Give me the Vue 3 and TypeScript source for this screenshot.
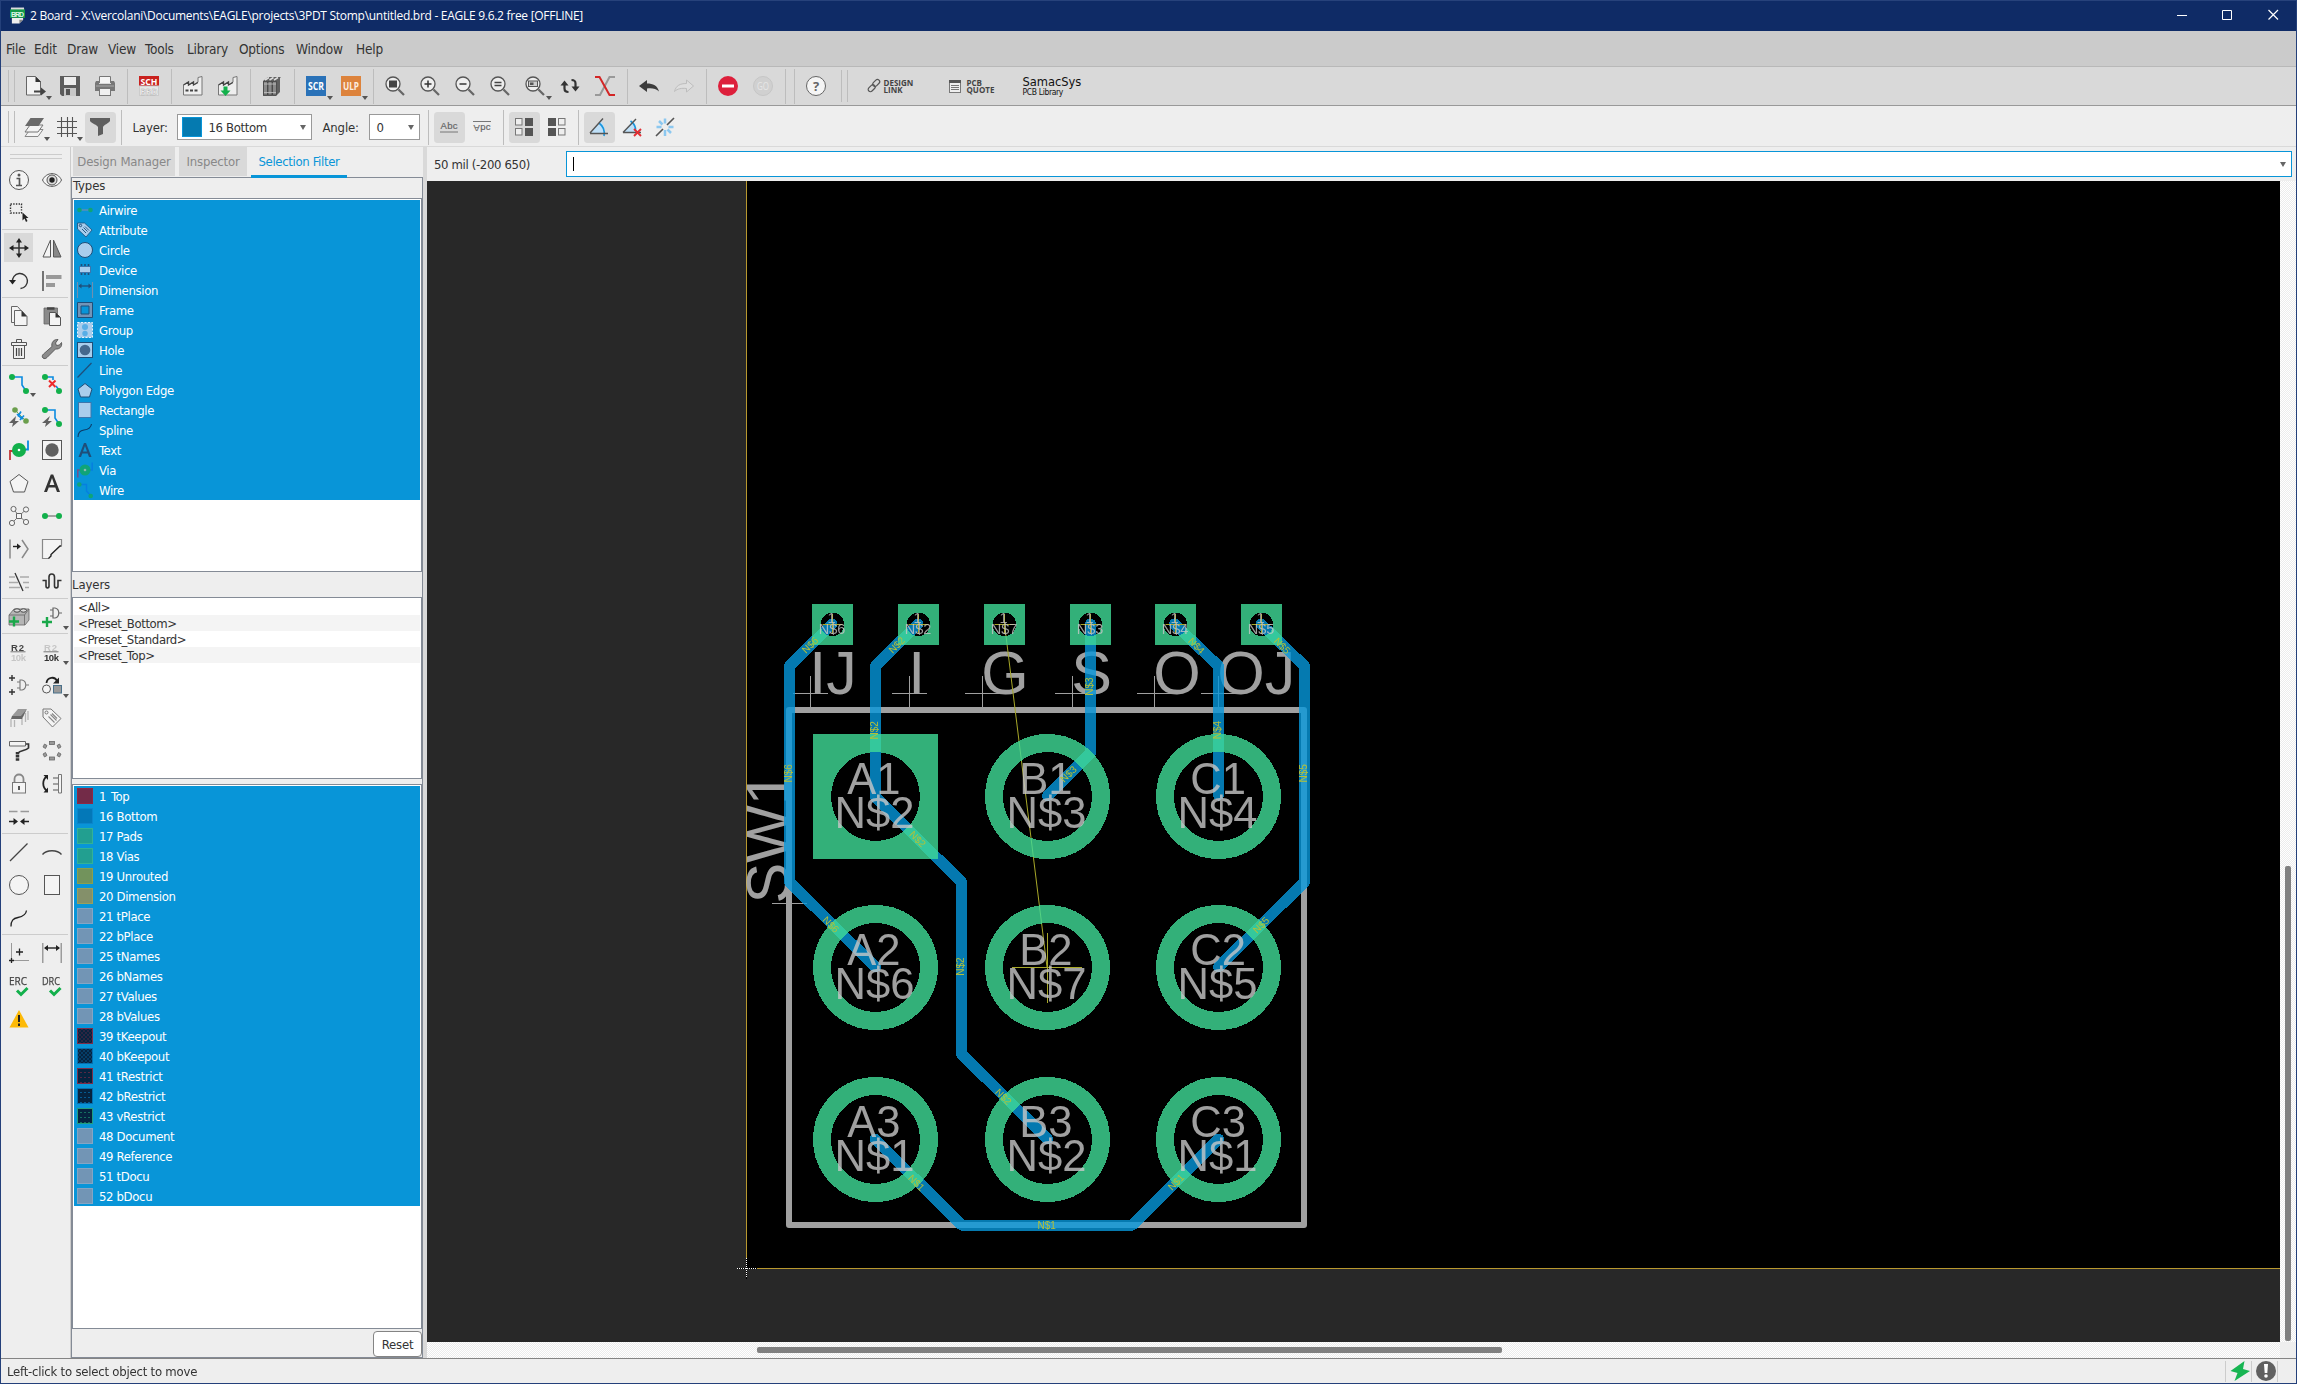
<script setup lang="ts">
interface Tool { icon?: string; sep?: boolean; menu?: boolean; active?: boolean }

const I: Record<string, string> = {
  brd: '<path d="M1 0h14v5H1z" fill="#ddd"/><path d="M2 11h12v2l-4 4H2z" fill="#eee"/><path d="M14 13l-4 4v-4z" fill="#888"/><rect x="0" y="2" width="16" height="9" fill="#159a4a"/><text x="8" y="9.6" font-size="7.5" font-weight="bold" font-family="Liberation Sans, sans-serif" fill="#dff5e6" text-anchor="middle" textLength="14">BRD</text>',
  newdoc: '<path d="M1.5 .5h9l5 5v13.500h-14z" fill="#f3f3f3" stroke="#666"/><path d="M10.500 .5v5.500h5.500z" fill="#333"/><path d="M9 14.500h7v-3l5 4-5 4v-3h-7z" fill="#444"/>',
  save: '<path d="M0 0h20v20H2l-2-2z" fill="#5c5c5c"/><rect x="4" y="1" width="12" height="8" fill="#ececec"/><rect x="4" y="12" width="12" height="8" fill="#c8c8c8"/><rect x="6" y="13" width="4" height="6" fill="#555"/>',
  print: '<path d="M4.500 7V.5h11V7" fill="#f5f5f5" stroke="#777"/><path d="M1 5h3v3h12V5h3l1 2v8H0V7z" fill="#777"/><rect x="4.500" y="12.500" width="11" height="7" fill="#f0f0f0" stroke="#777"/><path d="M1 10h18" stroke="#aaa"/>',
  sch: '<rect width="20" height="10" fill="#c9211e"/><rect x=".5" y="10" width="19" height="9.500" fill="#e6e6e6" stroke="#ccc"/><text x="10" y="8.600" font-size="9.500" font-weight="bold" font-family="Open Sans, sans-serif" fill="#fff" text-anchor="middle" textLength="17" lengthAdjust="spacingAndGlyphs">SCH</text><text x="10" y="18.600" font-size="9.500" font-weight="bold" font-family="Open Sans, sans-serif" fill="#fff" stroke="#aaa" stroke-width=".5" text-anchor="middle" textLength="17" lengthAdjust="spacingAndGlyphs">BRD</text>',
  factory: '<path d="M.5 19V9l5-3v3l5-3v3l4.500-3V1.500l4-1V19z" fill="#eee" stroke="#777"/><path d="M.5 9l5-3v3l5-3v3l4.500-2.500" fill="none" stroke="#444" stroke-width="1.300"/><path d="M2.500 14.500h12" stroke="#444" stroke-width="2" stroke-dasharray="3 1.500"/>',
  factorydown: '<path d="M.5 19V9l5-3v3l5-3v3l4.500-3V1.500l4-1V19z" fill="#eee" stroke="#777"/><path d="M.5 9l5-3v3l5-3v3l4.500-2.500" fill="none" stroke="#444" stroke-width="1.300"/><path d="M5.500 10.500h4v4h3L7.500 20l-5-5.500h3z" fill="#12b04b"/>',
  books: '<path d="M1 5l5-4h13l-1 1v14l-4 4H1z" fill="#606060"/><path d="M1.500 5.500h4v13.500h-4zM6 5.500h4v13.500H6zM10.500 5.500h4v13.500h-4z" fill="#8a8a8a" stroke="#444" stroke-width=".8"/><path d="M3 4l4-2.500M7.500 4l4-2.500M12 4l4-2.500" stroke="#ddd" stroke-width="1.500"/><path d="M2 8h12M2 16.500h12" stroke="#c5c5c5" stroke-width=".8"/>',
  scr: '<rect width="20" height="20" fill="#2a72b8"/><text x="10" y="13.800" font-size="10" font-weight="bold" font-family="Open Sans, sans-serif" fill="#fff" text-anchor="middle" textLength="16" lengthAdjust="spacingAndGlyphs">SCR</text>',
  ulp: '<rect width="20" height="20" fill="#dd833c"/><text x="10" y="13.800" font-size="10" font-weight="bold" font-family="Open Sans, sans-serif" fill="#fdeee0" text-anchor="middle" textLength="16" lengthAdjust="spacingAndGlyphs">ULP</text>',
  zfit: '<circle cx="8" cy="8" r="7" fill="#eee" stroke="#555" stroke-width="1.300"/><rect x="4" y="4.500" width="8" height="7" fill="#444"/><path d="M13.500 13.500L19 19" stroke="#666" stroke-width="2.200"/>',
  zin: '<circle cx="8" cy="8" r="7" fill="#eee" stroke="#555" stroke-width="1.300"/><path d="M4.500 8h7M8 4.500v7" stroke="#333" stroke-width="1.500"/><path d="M13.500 13.500L19 19" stroke="#666" stroke-width="2.200"/>',
  zout: '<circle cx="8" cy="8" r="7" fill="#eee" stroke="#555" stroke-width="1.300"/><path d="M4.500 8h7" stroke="#333" stroke-width="1.500"/><path d="M13.500 13.500L19 19" stroke="#666" stroke-width="2.200"/>',
  zeq: '<circle cx="8" cy="8" r="7" fill="#eee" stroke="#555" stroke-width="1.300"/><path d="M4.500 6.500h7M4.500 9.500h7" stroke="#444" stroke-width="1.300"/><path d="M13.500 13.500L19 19" stroke="#666" stroke-width="2.200"/>',
  zsel: '<circle cx="8" cy="8" r="7" fill="#eee" stroke="#555" stroke-width="1.300"/><rect x="3.500" y="5" width="9" height="5.500" fill="#ccc" stroke="#555"/><rect x="5" y="6.500" width="3.500" height="2.500" fill="#555"/><path d="M13.500 13.500L19 19" stroke="#666" stroke-width="2.200"/>',
  refresh: '<path d="M4.500 7.500v5c0 2.500 1.500 3.500 4 3.500M15.500 12.500v-5c0-2.500-1.500-3.500-4-3.500" fill="none" stroke="#333" stroke-width="2.200"/><path d="M.5 9.500l4-5 4 5zM19.500 10.500l-4 5-4-5z" fill="#333"/>',
  cross: '<path d="M0 19h5L14.500 1H20" fill="none" stroke="#999" stroke-width="2"/><path d="M0 1h4.500L14.500 19H20" fill="none" stroke="#d32626" stroke-width="2"/>',
  undo: '<path d="M0 10l8-6v3.500c6 0 10.500 2 12 8-3-3-7-3.500-12-3v3.500z" fill="#3c3c3c"/>',
  redo: '<path d="M19.500 10l-7-6v3.500C6 7.500 2 9.500.5 15.500c3-3 7-3.500 12-3V16z" fill="#dedede" stroke="#bdbdbd"/>',
  stop: '<circle cx="10" cy="10" r="10" fill="#dd1f3b"/><rect x="4" y="8.500" width="12" height="3" fill="#fff"/>',
  go: '<circle cx="10" cy="10" r="9.500" fill="#d0d0d0" stroke="#c6c6c6"/><text x="10" y="13.800" font-size="10.500" font-family="Open Sans, sans-serif" fill="#e6e6e6" text-anchor="middle" textLength="12" lengthAdjust="spacingAndGlyphs">GO</text>',
  help: '<circle cx="10" cy="10" r="9.500" fill="#f5f5f5" stroke="#666"/><text x="10" y="14.800" font-size="13" font-weight="bold" font-family="Open Sans, sans-serif" fill="#666" text-anchor="middle">?</text>',
  layers: '<path d="M6 12.500h13l-5 7H1z" fill="#f4f4f4" stroke="#888"/><path d="M6 8h13l-5 7H1z" fill="#f4f4f4" stroke="#777"/><path d="M6.500 1H20l-5.500 8H1z" fill="#6a6a6a"/>',
  grid: '<path d="M4.500 0v20M10.500 0v20M15.500 0v20M0 4.500h20M0 10.500h20M0 16.500h20" stroke="#555" stroke-width="1.100"/>',
  filter: '<path d="M0 1h20v3c-2 3-6 3.500-7 6v7l-5 2v-9C7 7.500 2 7 0 4z" fill="#5f5f5f"/>',
  abc: '<text x="10" y="12" font-size="9.500" font-family="Liberation Sans, sans-serif" fill="#666" stroke="#666" stroke-width=".2" text-anchor="middle" textLength="17">Abc</text><path d="M1 15h18" stroke="#777"/>',
  vpc: '<text x="10" y="-7.500" transform="scale(1 -1)" font-size="9.500" font-family="Liberation Sans, sans-serif" fill="#666" stroke="#666" stroke-width=".2" text-anchor="middle" textLength="17">Abc</text><path d="M1 4.500h18" stroke="#777"/>',
  sq1: '<rect x="1.500" y="1.500" width="6.500" height="6.500" fill="#eee" stroke="#777"/><rect x="11" y="1" width="8" height="8" fill="#555"/><rect x="1.500" y="11.500" width="6.500" height="6.500" fill="#eee" stroke="#777"/><rect x="11" y="11" width="8" height="8" fill="#555"/>',
  sq2: '<rect x="1" y="1" width="8" height="8" fill="#555"/><rect x="11.500" y="1.500" width="6.500" height="6.500" fill="#eee" stroke="#777"/><rect x="1" y="11" width="8" height="8" fill="#555"/><rect x="11.500" y="11.500" width="6.500" height="6.500" fill="#eee" stroke="#777"/>',
  ang: '<path d="M1.500 16L12 4c3 4 4 8 4 12z" fill="#bfe0f8"/><path d="M10 6c4 3 6 8 5 13" fill="none" stroke="#1a95dc" stroke-width="1.600"/><path d="M1 16L14 1.500M1 16.500h18" stroke="#555" stroke-width="1.400"/>',
  angx: '<path d="M1.500 15L10 5c3 4 4 7 4 10z" fill="#bfe0f8"/><path d="M8.500 4c4 3 5.500 7 5 10" fill="none" stroke="#1a95dc" stroke-width="1.600"/><path d="M1 15.500L14 2M1 15.500h18" stroke="#555" stroke-width="1.400"/><path d="M12 12l7 7M19 12l-7 7" stroke="#e22d33" stroke-width="1.900"/>',
  burst: '<path d="M10 1.500v5M10 13v6M1.500 10h5M13.500 10h5M4 4l3.500 3.500M12.500 12.500L16 16" stroke="#8cc8f0" stroke-width="2.500"/><path d="M19 1l-7 7M8 12l-7 7" stroke="#555" stroke-width="1.600"/>',
  info: '<circle cx="10" cy="10" r="9.500" fill="#f4f4f4" stroke="#555"/><path d="M7.500 8.500h3v7M7 15.500h6" fill="none" stroke="#555" stroke-width="1.700"/><circle cx="10" cy="5" r="1.500" fill="#555"/>',
  eye: '<path d="M.5 10c4-8.500 15-8.500 19 0-4 8.500-15 8.500-19 0z" fill="#f4f4f4" stroke="#555"/><circle cx="10" cy="10" r="5" fill="#ddd" stroke="#555"/><circle cx="10" cy="10" r="2.700" fill="#222"/>',
  group: '<path d="M1.500 1h11v9h-11z" fill="none" stroke="#333" stroke-width="1.400" stroke-dasharray="1.400 1.300"/><path d="M13.500 9.500v8l2-2 1.500 3.500 1.500-1-1.500-3h2.500z" fill="#222"/>',
  move: '<path d="M10 2v16M2 10h16" stroke="#333" stroke-width="1.500"/><path d="M10 0l3 4.500H7zM10 20l3-4.500H7zM0 10l4.500-3v6zM20 10l-4.500-3v6z" fill="#222"/>',
  mirror: '<path d="M8.500 2v17H1z" fill="#f4f4f4" stroke="#555"/><path d="M11.500 2v17H19z" fill="#888" stroke="#555"/>',
  rotate: '<path d="M3.500 11a7.500 7.500 0 1 1 8 6.500" fill="none" stroke="#333" stroke-width="1.400"/><path d="M0 9h7l-3.500 4.500z" fill="#222"/>',
  align: '<path d="M1 0v20" stroke="#222" stroke-width="1.200"/><rect x="4" y="4" width="15.500" height="4" fill="#999"/><rect x="4" y="12" width="9" height="4" fill="#999"/>',
  copy: '<path d="M2.500 .5h6l3.500 4v12H2.500z" fill="#f4f4f4" stroke="#666"/><path d="M5.500 4.500h7l5.500 6v9H5.500z" fill="#f4f4f4" stroke="#666"/><path d="M12.500 4.500v6H18z" fill="#333"/>',
  paste: '<path d="M2 2h13.500v16H2z" fill="#8a8a8a" stroke="#666" stroke-width=".8"/><path d="M5 2.500h7.500" stroke="#444" stroke-width="2.500"/><path d="M7.500 6.500h6l5 5v8h-11z" fill="#f4f4f4" stroke="#555"/><path d="M13.500 6.500v5h5z" fill="#333"/>',
  trash: '<path d="M2.500 3.500h15v3h-15zM7.500 3.500v-3h5v3M4.500 6.500h11v13h-11z" fill="#f0f0f0" stroke="#555"/><path d="M7.500 9v8M10 9v8M12.500 9v8" stroke="#444" stroke-width="1.200"/>',
  wrench: '<path d="M1 19c-1.500-1.500-.5-3 .5-4L10 7.500c-1-4 2-7.500 6-7l-2.500 3.500 1 2.500 3-.5 2-2.500c1 4-2 7-6 6.500L5 18.500c-1 1-2.800 1.700-4 .5z" fill="#8b8b8b" stroke="#555" stroke-width=".9"/>',
  route: '<path d="M3 3h10v8l4 6" fill="none" stroke="#0a8be0" stroke-width="1.600"/><circle cx="3" cy="3" r="3" fill="#12b04b"/><circle cx="17" cy="17" r="3" fill="#12b04b"/>',
  ripup: '<path d="M3 3h8v3M14 12l3 4" fill="none" stroke="#0a8be0" stroke-width="1.600"/><circle cx="3" cy="3" r="3" fill="#12b04b"/><circle cx="17" cy="17" r="3" fill="#12b04b"/><path d="M7 6.500l6.500 6.500M13.500 6.500L7 13" stroke="#ee2a2a" stroke-width="2"/>',
  fan: '<path d="M6 3l11 11" stroke="#78a95a"/><path d="M8 7l4 4M12 4.500l-3 5M15 8.500l-4 4.500M10 9l4 3" stroke="#0a8be0" stroke-width="1.600"/><circle cx="6" cy="3" r="2.800" fill="#6b9f4d"/><circle cx="17" cy="14" r="2.800" fill="#6b9f4d"/><path d="M7 9L0 16h4l-1 4 7-6H6z" fill="#606060"/>',
  auto: '<path d="M3 3h10v8l4 6" fill="none" stroke="#0a8be0" stroke-width="1.600"/><circle cx="3" cy="3" r="3" fill="#12b04b"/><circle cx="17" cy="17" r="3" fill="#12b04b"/><path d="M8 9l-8 7h4l-1 4 7-6H6z" fill="#606060"/>',
  via: '<path d="M1 20v-9h4" fill="none" stroke="#c23636" stroke-width="1.800"/><path d="M19 .5v9h-4" fill="none" stroke="#0a8be0" stroke-width="1.800"/><circle cx="10" cy="10" r="7" fill="#12b04b"/><circle cx="10" cy="10" r="1.300" fill="#fff"/>',
  hole: '<rect x=".5" y=".5" width="19" height="19" fill="#f4f4f4" stroke="#555"/><circle cx="10" cy="10" r="6.700" fill="#606060"/>',
  poly: '<path d="M10 1.500l9 7-3.500 10.500h-11L1 8.500z" fill="#f4f4f4" stroke="#555"/>',
  text: '<path d="M2 19L8.800 1.500h2.400L18 19h-3l-1.700-4.500H6.700L5 19zM7.600 12h4.800L10 5z" fill="#333" fill-rule="evenodd"/>',
  ratsnest: '<path d="M10 10L4.500 3M10 10l7-6.500M10 10l-7 7M10 10l7 6" stroke="#777"/><g fill="#f4f4f4" stroke="#666"><circle cx="4.500" cy="3" r="2.600"/><circle cx="17" cy="3.500" r="2.600"/><circle cx="3" cy="17" r="2.600"/><circle cx="17" cy="16" r="2.600"/><path d="M7.500 7.500h5v5h-5z"/></g>',
  airwire: '<path d="M3 10h14" stroke="#888" stroke-width="1.500"/><circle cx="3" cy="10" r="3" fill="#12b04b"/><circle cx="17" cy="10" r="3" fill="#12b04b"/>',
  split: '<path d="M1 .5v19" stroke="#888" stroke-width="1.500"/><path d="M13 1l6 9-6 9" fill="none" stroke="#888" stroke-width="1.500"/><path d="M4 7.500h5" stroke="#222" stroke-width="1.400"/><path d="M8 4.500l4 3-4 3z" fill="#222"/>',
  miter: '<path d="M7 19.500H.5V.5h19V7z" fill="#f4f4f4"/><path d="M7 19.500H.5V.5h19V6.500" fill="none" stroke="#888" stroke-width="1.200"/><path d="M6.500 19.500L9 17v-1.500L18 7h1.500" fill="none" stroke="#222" stroke-width="1.400"/>',
  slice: '<path d="M0 5h6M11 5h9M0 10.500h9M14 10.500h6M0 15.500h11M16 15.500h4" stroke="#aaa" stroke-width="1.500"/><path d="M6 1l8 18" stroke="#333" stroke-width="1.300"/>',
  meander: '<path d="M.5 8.500H4V14c0 2.500 3 2.500 3 0V5c0-4 5.500-4 5.500 0v9c0 2.500 3.500 2.500 3.500 0V8.500h3.500" fill="none" stroke="#333" stroke-width="1.600"/>',
  addpart: '<path d="M0 8l5-6h15v11l-4 5H0z" fill="#b5b5b5" stroke="#666" stroke-width=".8"/><path d="M0 8h15.500v10M15.500 8L20 2" fill="none" stroke="#666" stroke-width=".8"/><ellipse cx="8" cy="3.500" rx="3" ry="1.700" fill="#ddd" stroke="#444"/><ellipse cx="14.500" cy="3.500" rx="3" ry="1.700" fill="#ddd" stroke="#444"/><path d="M5 9.500v10M0 14.500h10" stroke="#1aa84a" stroke-width="2.400"/>',
  addgate: '<path d="M11 1v10h2c5-1 5-9 0-10zM8 3h3M8 9h3M17 6h3" fill="none" stroke="#666" stroke-width="1.200"/><path d="M5 10v10M0 15h10" stroke="#1aa84a" stroke-width="2.400"/>',
  name: '<text x="2" y="8.500" font-size="9.500" font-weight="bold" font-family="Liberation Sans, sans-serif" fill="#444" textLength="13">R2</text><path d="M1.500 9.800h15" stroke="#777"/><text x="2" y="18.500" font-size="9.500" font-weight="bold" font-family="Liberation Sans, sans-serif" fill="#c6c6c6" textLength="15">10k</text>',
  value: '<text x="2" y="8.500" font-size="9.500" font-weight="bold" font-family="Liberation Sans, sans-serif" fill="#c6c6c6" textLength="13">R2</text><path d="M1.500 9.800h15" stroke="#777"/><text x="2" y="18.500" font-size="9.500" font-weight="bold" font-family="Liberation Sans, sans-serif" fill="#333" textLength="15">10k</text>',
  smash: '<path d="M3 0v6M0 3h6M3 14v6M0 17h6" stroke="#333" stroke-width="1.400"/><path d="M11 5v10h2c5-1 5-9 0-10zM8 7h3M8 13h3M17 10h3" fill="none" stroke="#777" stroke-width="1.100"/>',
  replace: '<circle cx="4.500" cy="14" r="4" fill="#f4f4f4" stroke="#555"/><rect x="11.500" y="10.500" width="8" height="7.500" fill="#999" stroke="#49708a"/><path d="M4.500 8C5 2 13 1 15 6" fill="none" stroke="#222" stroke-width="1.800"/><path d="M17 2.500v6h-6z" fill="#222"/>',
  chip: '<path d="M2 11v8M5.500 12v7M13 10v7M16.500 5v9M19 3v9" stroke="#b5b5b5" stroke-width="1.300"/><path d="M3 8l6-7h9l-4 8z" fill="#999"/><path d="M3 8h9l5-6-4 9H2z" fill="#666"/>',
  tag: '<path d="M1 1h8l10 9.500-8.500 8.500L1 9z" fill="#f4f4f4" stroke="#777"/><circle cx="4.500" cy="4.500" r="1.500" fill="none" stroke="#777"/><path d="M8.500 6.500l6 6M6.500 8.500l6 6M10 5.500l5 5" stroke="#888" stroke-width="1.100"/>',
  roller: '<path d="M.5 .5h16v4.500H.5z" fill="#f4f4f4" stroke="#666"/><path d="M17 3h2.500v4c-3 3-8 2-10.500 5" fill="none" stroke="#333" stroke-width="1.700"/><path d="M8.500 11v9" stroke="#333" stroke-width="3.500" stroke-dasharray="2.500 .6"/>',
  optimize: '<g fill="#999" stroke="#666" stroke-width=".8"><rect x="7.500" y=".5" width="5" height="3"/><rect x="7.500" y="16" width="5" height="3"/><path d="M1 6l1.500-3 2.500 1.500L3.500 7.500zM19 6l-1.500-3L15 4.500l1.500 3zM1 13l1.500 3 2.500-1.500-1.500-3zM19 13l-1.500 3-2.500-1.500 1.500-3z"/></g>',
  lock: '<path d="M5.500 9V5c0-6 9-6 9 0v4" fill="none" stroke="#888" stroke-width="1.800"/><rect x="3.500" y="8.500" width="13" height="10.500" fill="#f4f4f4" stroke="#777"/><path d="M10 12v4" stroke="#555" stroke-width="2"/>',
  swap: '<path d="M5 2C0 6 0 13 5 17" fill="none" stroke="#222" stroke-width="1.800"/><path d="M1.500 1H6v5zM1.500 18.500H6v-5z" fill="#222"/><path d="M11 4h6M11 10h6M11 16h6" stroke="#888" stroke-width="1.500"/><path d="M16.500 .5h3v18.500h-3z" fill="#f4f4f4" stroke="#777"/>',
  gap: '<path d="M0 4.500h8.500M11.500 4.500H20" stroke="#999" stroke-width="1.500"/><path d="M0 14.500h5M15 14.500h5" stroke="#222" stroke-width="1.400"/><path d="M4.500 11l4.500 3.500L4.500 18zM15.500 11L11 14.500l4.500 3.500z" fill="#222"/>',
  line: '<path d="M1 19L18.500 1.500" stroke="#444" stroke-width="1.300"/>',
  arc: '<path d="M.5 12.500c4-5 15-5 19 0" fill="none" stroke="#444" stroke-width="1.300"/>',
  circle: '<circle cx="10" cy="10" r="9.500" fill="#f4f4f4" stroke="#555"/>',
  rect: '<rect x="2.500" y=".5" width="15" height="19" fill="#f4f4f4" stroke="#555"/>',
  spline: '<path d="M2 18.500c0-6 2-8 7-9 5-1 8-3 8.500-7" fill="none" stroke="#222" stroke-width="1.300"/>',
  mark: '<path d="M2.500 0v20M0 17.500h20" stroke="#999"/><path d="M10.500 5.500v7M7 9h7M2.500 15v5M0 17.500h5" stroke="#222" stroke-width="1.300"/>',
  dimension: '<path d="M.8 0v20M19.200 0v20" stroke="#888" stroke-width="1.200"/><path d="M3 5h14" stroke="#222" stroke-width="1.400"/><path d="M2 5l4-3v6zM18 5l-4-3v6z" fill="#222"/>',
  erc: '<text x="9" y="9" font-size="11" font-family="Open Sans, sans-serif" fill="#444" stroke="#444" stroke-width=".25" text-anchor="middle" textLength="18" lengthAdjust="spacingAndGlyphs">ERC</text><path d="M8 14.500l4 4 6.500-6.500" fill="none" stroke="#12b04b" stroke-width="3"/>',
  drc: '<text x="9" y="9" font-size="11" font-family="Open Sans, sans-serif" fill="#444" stroke="#444" stroke-width=".25" text-anchor="middle" textLength="18" lengthAdjust="spacingAndGlyphs">DRC</text><path d="M8 14.500l4 4 6.500-6.500" fill="none" stroke="#12b04b" stroke-width="3"/>',
  warn: '<path d="M10 1l9.500 17.500H.5z" fill="#fdba08"/><path d="M10 6v7M10 14.500v2.500" stroke="#222" stroke-width="2"/>',
}

const main: Tool[] = [
  { icon: 'newdoc', menu: true }, { icon: 'save' }, { icon: 'print' }, { sep: true },
  { icon: 'sch' }, { sep: true }, { icon: 'factory' }, { icon: 'factorydown' }, { sep: true },
  { icon: 'books' }, { sep: true }, { icon: 'scr', menu: true }, { icon: 'ulp', menu: true }, { sep: true },
  { icon: 'zfit' }, { icon: 'zin' }, { icon: 'zout' }, { icon: 'zeq' }, { icon: 'zsel', menu: true },
  { icon: 'refresh' }, { icon: 'cross' }, { sep: true }, { icon: 'undo' }, { icon: 'redo' }, { sep: true },
  { icon: 'stop' }, { icon: 'go' }, { sep: true }, { sep: true }, { icon: 'help' },
]
const params: Tool[] = [
  { icon: 'abc', active: true }, { icon: 'vpc' }, { sep: true }, { icon: 'sq1', active: true }, { icon: 'sq2' },
  { sep: true }, { icon: 'ang', active: true }, { icon: 'angx' }, { icon: 'burst' },
]
const side: string[][] = [
  ['info', 'eye', 'group', ''],
  ['move', 'mirror', 'rotate', 'align'],
  ['copy', 'paste', 'trash', 'wrench'],
  ['route', 'ripup', 'fan', 'auto', 'via', 'hole', 'poly', 'text', 'ratsnest', 'airwire', 'split', 'miter', 'slice', 'meander'],
  ['addpart', 'addgate'],
  ['name', 'value', 'smash', 'replace', 'chip', 'tag', 'roller', 'optimize', 'lock', 'swap', 'gap', ''],
  ['line', 'arc', 'circle', 'rect', 'spline', ''],
  ['mark', 'dimension', 'erc', 'drc', 'warn', ''],
]
const sideMenus = ['route', 'addgate', 'value', 'replace']
const menus: [string, number][] = [['File', 28], ['Edit', 33], ['Draw', 41], ['View', 37], ['Tools', 42], ['Library', 52], ['Options', 57], ['Window', 60], ['Help', 30]]

const L = '#a9cdec', D = '#1f4e79'
const types: [string, string][] = [
  ['Airwire', '<path d="M2 8h12" stroke="#6f8fb0" stroke-width="1.200"/><circle cx="2.500" cy="8" r="2.300" fill="#10a477"/><circle cx="13.500" cy="8" r="2.300" fill="#10a477"/>'],
  ['Attribute', `<path d="M.5 1h7l7.500 7-6 7L.5 7z" fill="${L}" stroke="${D}" stroke-width=".8"/><circle cx="3.500" cy="3.500" r="1.200" fill="none" stroke="${D}"/><path d="M5 7l4 4M6.500 5.500l4 4M8 4.500l4 4" stroke="${D}" stroke-width=".9"/>`],
  ['Circle', `<circle cx="8" cy="8" r="7.500" fill="${L}" stroke="${D}"/>`],
  ['Device', `<path d="M4.500 2v11M8 2v11M11.500 2v11" stroke="${D}" stroke-width="1.600"/><rect x="2.500" y="4.500" width="11" height="6" fill="${L}" stroke="#3c76ad"/>`],
  ['Dimension', `<path d="M.5 0v16M15.500 0v16" stroke="#6f8fb0" stroke-width="1.100"/><path d="M2 4h12" stroke="${D}" stroke-width="1.300"/><path d="M1.500 4l3-2.500v5zM14.500 4l-3-2.500v5z" fill="${D}"/>`],
  ['Frame', `<path d="M.5 .5h15v15H.5zM4 4v8h8V4z" fill="#7395b8" fill-rule="evenodd" stroke="${D}"/>`],
  ['Group', `<rect x=".5" y=".5" width="15" height="15" fill="${L}" stroke="#e8f2fb" stroke-dasharray="2 1.500"/><circle cx="8" cy="5" r="3" fill="#58aee6"/><circle cx="8" cy="11.500" r="2.700" fill="#58aee6"/>`],
  ['Hole', `<rect x=".5" y=".5" width="15" height="15" fill="${L}" stroke="${D}"/><circle cx="8" cy="8" r="5.300" fill="#45688d"/>`],
  ['Line', `<path d="M.5 15.500L14.500 1" stroke="${D}" stroke-width="1.200"/>`],
  ['Polygon Edge', `<path d="M8 1.500l7 5.500-2.500 8h-9L1 7z" fill="${L}" stroke="${D}"/>`],
  ['Rectangle', `<rect x="1.500" y=".5" width="12.500" height="15" fill="${L}" stroke="#3c76ad"/>`],
  ['Spline', `<path d="M1 15c0-5 2-6.500 6-7 4-.5 7-2.500 7.500-6" fill="none" stroke="#0d3a66" stroke-width="1.100"/>`],
  ['Text', `<path d="M1.500 15L7 1h2l5.500 14h-2.500l-1.300-3.500H5.300L4 15zM6 9.500h4L8 4z" fill="${D}" fill-rule="evenodd"/>`],
  ['Via', '<path d="M.8 15.500V8H4" fill="none" stroke="#75508a" stroke-width="1.500"/><path d="M15.200 .5V8H12" fill="none" stroke="#067fe0" stroke-width="1.500"/><circle cx="8" cy="8" r="5.500" fill="#10a477"/><circle cx="8" cy="8" r="1.300" fill="#8cb8b4"/>'],
  ['Wire', '<path d="M2 2.500h7.500V9l4 4.500" fill="none" stroke="#067fe0" stroke-width="1.400"/><circle cx="2.300" cy="2.500" r="2.300" fill="#10a477"/><circle cx="13.700" cy="14" r="2.300" fill="#10a477"/>'],
]
const presets = ['<All>', '<Preset_Bottom>', '<Preset_Standard>', '<Preset_Top>']
const layers: [string, string, string][] = [
  ['1', 'Top', 'top'], ['16', 'Bottom', 'bottom'], ['17', 'Pads', 'pads'], ['18', 'Vias', 'pads'],
  ['19', 'Unrouted', 'unrouted'], ['20', 'Dimension', 'dim'], ['21', 'tPlace', ''], ['22', 'bPlace', ''],
  ['25', 'tNames', ''], ['26', 'bNames', ''], ['27', 'tValues', ''], ['28', 'bValues', ''],
  ['39', 'tKeepout', 'dots red'], ['40', 'bKeepout', 'dots blue'], ['41', 'tRestrict', 'dash red'],
  ['42', 'bRestrict', 'dash blue'], ['43', 'vRestrict', 'dash green'], ['48', 'Document', ''],
  ['49', 'Reference', ''], ['51', 'tDocu', ''], ['52', 'bDocu', ''],
]

// Board geometry, in screen units
const smallPads = [
  { x: 832.5, n: 'N$6' }, { x: 918.5, n: 'N$2' }, { x: 1004.5, n: 'N$7' },
  { x: 1090.5, n: 'N$3' }, { x: 1175.5, n: 'N$4' }, { x: 1261.5, n: 'N$5' },
]
const padY = 624.5
const bigPads = [
  { x: 875.5, y: 796.5, p: 'A1', n: 'N$2', square: true }, { x: 1047.5, y: 796.5, p: 'B1', n: 'N$3' }, { x: 1218.5, y: 796.5, p: 'C1', n: 'N$4' },
  { x: 875.5, y: 967.5, p: 'A2', n: 'N$6' }, { x: 1047.5, y: 967.5, p: 'B2', n: 'N$7' }, { x: 1218.5, y: 967.5, p: 'C2', n: 'N$5' },
  { x: 875.5, y: 1139.5, p: 'A3', n: 'N$1' }, { x: 1047.5, y: 1139.5, p: 'B3', n: 'N$2' }, { x: 1218.5, y: 1139.5, p: 'C3', n: 'N$1' },
]
const names = [
  { x: 810.5, t: 'IJ' }, { x: 909.5, t: 'I' }, { x: 982.5, t: 'G' }, { x: 1072.5, t: 'S' }, { x: 1154.5, t: 'O' }, { x: 1218.5, t: 'OJ' },
]
const traces = [
  '832,624 789.5,666 789.5,882 875.5,967', '918,624 875.5,666 875.5,797 961.5,882 961.5,1054 1047.5,1139',
  '1090.5,624 1090.5,753 1047.5,796', '1174.5,624 1218.5,666 1218.5,795',
  '1261,624 1304.5,666 1304.5,882 1218.5,967', '875,1139 961.5,1225 1132.5,1225 1218.5,1139',
]
const netLabels: [string, number, number, number][] = [
  ['N$6', 810, 645, -45], ['N$6', 788.3, 773.3, -90], ['N$6', 831, 924.5, 45],
  ['N$2', 896.7, 645, -45], ['N$2', 874.3, 730.3, -90], ['N$2', 917.7, 839, 45], ['N$2', 960.6, 966.6, -90], ['N$2', 1003.6, 1096.6, 45],
  ['N$3', 1089, 686.6, -90], ['N$3', 1068.3, 774, -45],
  ['N$4', 1196.6, 645.6, 45], ['N$4', 1217.6, 730, -90],
  ['N$5', 1282.3, 645.6, 45], ['N$5', 1303.6, 773.3, -90], ['N$5', 1261, 925, -45],
  ['N$1', 916.6, 1182.6, 45], ['N$1', 1046.6, 1225, 0], ['N$1', 1176, 1182, -45],
]
</script>

<template>
  <div class="window">
    <header class="title">
      <svg class="appicon" width="15" height="17" viewBox="0 0 16 17" v-html="I.brd" />
      <span class="caption">2 Board - X:\vercolani\Documents\EAGLE\projects\3PDT Stomp\untitled.brd - EAGLE 9.6.2 free [OFFLINE]</span>
      <svg class="winbtns" width="104" height="12" viewBox="0 0 104 12">
        <path d="M0 6.500h10M45.500 1.500h9v9h-9z" fill="none" stroke="#fff" />
        <path d="M91.500 1l9.500 9.500M101 1l-9.500 9.500" stroke="#fff" stroke-width="1.200" />
      </svg>
    </header>
    <nav class="menubar"><span v-for="m in menus" :key="m[0]" :style="{ width: m[1] + 'px' }">{{ m[0] }}</span></nav>

    <div class="bar main">
      <i class="handle" />
      <template v-for="(t, i) in main" :key="i">
        <i v-if="t.sep" class="vsep" />
        <div v-else class="cell"><svg width="20" height="20" viewBox="0 0 20 20" v-html="I[t.icon!]" /><b v-if="t.menu" class="tri" /></div>
      </template>
      <i class="handle second" />
      <div class="service link">
        <svg width="12" height="12" viewBox="0 0 12 12" fill="none" stroke="#555" stroke-width="1.200"><rect x="4.500" y="1" width="8" height="4.500" rx="2.200" transform="rotate(-45 8 3.500)" /><rect x="-.5" y="6" width="8" height="4.500" rx="2.200" transform="rotate(-45 3.500 8)" /></svg>
        <span>DESIGN<br>LINK</span>
      </div>
      <div class="service quote">
        <svg width="12" height="13" viewBox="0 0 12 13"><rect x=".5" y=".5" width="11" height="12" fill="#eee" stroke="#777" /><path d="M0 1.500h12" stroke="#555" stroke-width="3" /><path d="M2 5.500h8M2 7.500h8M2 9.500h8" stroke="#777" /></svg>
        <span>PCB<br>QUOTE</span>
      </div>
      <div class="samac"><span>SamacSys</span><small>PCB Library</small></div>
    </div>

    <div class="bar param">
      <i class="handle" />
      <div class="cell"><svg width="20" height="20" viewBox="0 0 20 20" v-html="I.layers" /><b class="tri" /></div>
      <div class="cell"><svg width="20" height="20" viewBox="0 0 20 20" v-html="I.grid" /><b class="tri" /></div>
      <div class="cell active"><svg width="20" height="20" viewBox="0 0 20 20" v-html="I.filter" /></div>
      <i class="vsep" />
      <label class="l1">Layer:</label>
      <div class="combo layer"><i class="chip" /><span>16 Bottom</span><b /></div>
      <label class="l2">Angle:</label>
      <div class="combo angle"><span>0</span><b /></div>
      <i class="vsep wide" />
      <template v-for="(t, i) in params" :key="i">
        <i v-if="t.sep" class="vsep" />
        <div v-else class="cell" :class="{ active: t.active }"><svg width="20" height="20" viewBox="0 0 20 20" v-html="I[t.icon!]" /></div>
      </template>
    </div>

    <main class="body">
      <aside class="tools">
        <i class="grip" />
        <div v-for="(g, i) in side" :key="i" class="tgroup">
          <div v-for="(t, j) in g" :key="j" class="tcell" :class="{ active: t === 'move' }">
            <svg v-if="t" width="20" height="20" viewBox="0 0 20 20" v-html="I[t]" />
            <b v-if="sideMenus.includes(t)" class="tri" />
          </div>
        </div>
      </aside>

      <section class="dock">
        <div class="tabs"><span class="t1">Design Manager</span><span class="t2">Inspector</span><span class="t3">Selection Filter</span></div>
        <div class="panel">
          <h4>Types</h4>
          <div class="list types"><ul>
            <li v-for="t in types" :key="t[0]"><svg width="16" height="16" viewBox="0 0 16 16" v-html="t[1]" />{{ t[0] }}</li>
          </ul></div>
          <h4 class="second">Layers</h4>
          <div class="list presets"><p v-for="p in presets" :key="p">{{ p }}</p></div>
          <div class="list layers"><ul>
            <li v-for="l in layers" :key="l[0]"><i class="sw" :class="l[2]" /><span :class="{ one: l[0] === '1' }">{{ l[0] }} {{ l[1] }}</span></li>
          </ul></div>
          <footer><button>Reset</button></footer>
        </div>
      </section>
      <i class="splitter" />

      <section class="editor">
        <div class="command"><span>50 mil (-200 650)</span><div class="input"><i /><b /></div></div>
        <div class="view">
          <svg class="board" width="1853" height="1161" viewBox="427 181 1853 1161">
            <rect x="427" y="181" width="1853" height="1161" fill="#282828" />
            <rect x="746" y="181" width="1534" height="1087" fill="#000" />
            <path d="M746.500 181V1268.500H2280" fill="none" stroke="#b8982f" />
            <g opacity=".8">
              <rect x="789" y="710" width="515" height="515" fill="none" stroke="#c8c8c8" stroke-width="6" stroke-linejoin="round" />
              <g fill="#c8c8c8" font-size="61">
                <text v-for="n in names" :key="n.t" :x="n.x - 1.2" y="693.500">{{ n.t }}</text>
                <text transform="translate(789 903.500) rotate(-90)">SW1</text>
              </g>
              <path v-for="n in names" :key="n.t" :d="`M${n.x - 17.5} 693.5h35M${n.x} 676v35`" stroke="#c8c8c8" />
              <path d="M772 903.500h35" stroke="#c8c8c8" />
            </g>
            <g opacity=".8" fill="none" stroke="#0698dc" stroke-width="11" stroke-linecap="round" stroke-linejoin="round" shape-rendering="crispEdges">
              <polyline v-for="t in traces" :key="t" :points="t" />
            </g>
            <g stroke="#a8a828" fill="none">
              <path d="M1004.500 624L1047 967M1012 967.500h70M1047.500 933v70" />
              <path v-for="p in smallPads" :key="p.x" :d="`M${p.x - 10} 624.5h20M${p.x} 614v20`" />
            </g>
            <g opacity=".8" fill="#40dc98" fill-rule="evenodd" shape-rendering="crispEdges">
              <path v-for="p in smallPads" :key="p.x" :d="`M${p.x - 20.5} ${padY - 20.5}h41v41h-41zM${p.x - 11.7} ${padY}a11.7 11.7 0 1 0 23.4 0a11.7 11.7 0 1 0 -23.4 0z`" />
              <template v-for="p in bigPads" :key="p.p">
                <path v-if="p.square" :d="`M${p.x - 62.5} ${p.y - 62.5}h125v125h-125zM${p.x - 44.5} ${p.y}a44.5 44.5 0 1 0 89 0a44.5 44.5 0 1 0 -89 0z`" />
                <circle v-else :cx="p.x" :cy="p.y" r="53.500" fill="none" stroke="#40dc98" stroke-width="18" />
              </template>
            </g>
            <g opacity=".8" fill="#c8c8c8">
              <g font-size="43.600">
                <template v-for="p in bigPads" :key="p.p">
                  <text :x="p.x - 28.3" :y="p.y - 2.3">{{ p.p }}</text>
                  <text :x="p.x - 41" :y="p.y + 31.9">{{ p.n }}</text>
                </template>
              </g>
              <g font-size="14.500" text-anchor="middle">
                <template v-for="p in smallPads" :key="p.x">
                  <text :x="p.x - 1" y="623">1</text>
                  <text :x="p.x - .5" y="634">{{ p.n }}</text>
                </template>
              </g>
            </g>
            <g fill="#b4c038" font-size="10" text-anchor="middle">
              <text v-for="(n, i) in netLabels" :key="i" :transform="`translate(${n[1]} ${n[2]}) rotate(${n[3]})`" y="3.600">{{ n[0] }}</text>
            </g>
            <path d="M737 1268.500h20M746.500 1259v20" stroke="#000" />
            <path d="M737 1268.500h20M746.500 1258v20" stroke="#fff" stroke-dasharray="1 1" />
          </svg>
          <div class="vscroll"><i /></div>
          <div class="hscroll"><i /></div>
        </div>
      </section>
    </main>

    <footer class="status">
      <span>Left-click to select object to move</span>
      <i /><svg width="25" height="22" viewBox="0 0 25 22"><path d="M18.500 1L4.500 11l7 2-3 8L24 11l-7-2z" fill="#17b552" /></svg>
      <i /><svg width="25" height="22" viewBox="0 0 25 22"><circle cx="14" cy="11" r="10" fill="#606060" /><path d="M12 4h4l-.7 9h-2.600z" fill="#fff" /><circle cx="14" cy="16" r="1.800" fill="#fff" /></svg><i />
    </footer>
  </div>
</template>

<style>
body { margin: 0; overflow: hidden; }
</style>

<style scoped>
* { box-sizing: border-box; }
.window { width: 2297px; height: 1384px; display: flex; flex-direction: column; background: #eee; border: solid #24407a; border-width: 0 1px; font: 13px 'DejaVu Sans Condensed', 'DejaVu Sans', sans-serif; letter-spacing: -.35px; color: #333; }
svg { display: block; flex: none; overflow: visible; }
.board { overflow: hidden; letter-spacing: 0; }
.title { height: 31px; background: #0f2b66; border-top: 1px solid #27427b; display: flex; align-items: center; color: #fff; padding: 0 0 2px 9px; flex: none; }
.appicon { letter-spacing: 0; }
.caption { font: 12px 'Open Sans', sans-serif; letter-spacing: -.28px; margin-left: 5px; flex: 1; white-space: pre; }
.winbtns { margin-right: 15px; }
.menubar { height: 36px; background: #cbcbcb; border-bottom: 1px solid #b8b8b8; display: flex; align-items: center; padding-left: 5px; flex: none; font-size: 13.500px; letter-spacing: -.2px; }
.menubar span { flex: none; white-space: nowrap; }
.bar { display: flex; align-items: center; flex: none; }
.main { height: 39px; background: #d9d9d9; border-bottom: 1px solid #999; }
.param { height: 41px; border-bottom: 1px solid #d9d9d9; padding-top: 2px; }
.handle { width: 16.500px; height: 32px; flex: none; }
.handle::before { content: ''; display: block; width: 5px; height: 100%; margin-left: 7px; border: solid #bdbdbd; border-width: 0 1px; }
.cell { width: 35px; height: 31px; flex: none; display: flex; align-items: center; justify-content: center; position: relative; letter-spacing: 0; }
.param .cell { width: 33px; border: solid transparent; background-clip: padding-box; border-width: 0 1px; }
.param .cell.active { background-color: #d9d9d9; border-radius: 4px; }
.vsep { width: 9px; height: 35px; flex: none; display: flex; justify-content: center; }
.vsep::before { content: ''; width: 1px; background: #bdbdbd; }
.wide { width: 13px; padding-left: 4px; }
.tri { position: absolute; width: 0; height: 0; border: solid transparent; border-width: 4px 3px 0; border-top-color: #555; right: 1px; bottom: 1px; }
.main .tri { right: 1px; bottom: 2px; }
.param .tri { right: 0; bottom: 2px; }
.second.handle { width: 34px; }
.service { display: flex; align-items: center; flex: none; font: bold 8px/7.500px 'Open Sans', sans-serif; letter-spacing: 0; color: #444; gap: 4px; }
.link { width: 81px; }
.quote { width: 74px; gap: 6px; }
.samac { color: #111; display: flex; flex-direction: column; line-height: 1; letter-spacing: 0; }
.samac span { height: 12px; font-size: 12.800px; letter-spacing: -.05px; }
.samac small { font-size: 8.500px; letter-spacing: -.35px; }
.l1 { width: 51px; padding-left: 7px; }
.l2 { width: 57px; padding-left: 11px; }
label { flex: none; letter-spacing: -.15px; }
.combo { height: 26px; background: #fff; border: 1px solid #999; display: flex; align-items: center; flex: none; padding: 0 5px 0 7px; }
.combo.layer { width: 135px; padding-left: 4px; }
.combo.angle { width: 51px; }
.combo span { flex: 1; }
.combo b, .input b { border: solid transparent; border-width: 5px 3px 0; border-top-color: #666; }
.chip { width: 20px; height: 20px; background: #057ab0; border: 1px solid #0895d8; margin-right: 7px; }
.body { flex: 1; display: flex; min-height: 0; }
.tools { width: 69px; flex: none; margin-top: 2px; letter-spacing: 0; }
.grip { display: block; width: 52px; height: 5px; margin: 5px 0 4px 9px; border: solid #ccc; border-width: 1px 0; }
.tgroup { display: flex; flex-wrap: wrap; width: 66px; margin-left: 1px; border-top: 1px solid #ccc; padding-top: 1px; }
.tgroup:nth-child(2) { border-top: 0; padding-top: 0; }
.tcell { width: 33px; height: 33px; display: flex; align-items: center; justify-content: center; position: relative; }
.tcell .tri { right: -1px; bottom: 3px; }
.tcell.active { background: linear-gradient(#d9d9d9, #d9d9d9) center / 29px 29px no-repeat; }
.dock { width: 353px; flex: none; display: flex; flex-direction: column; border-left: 1px solid #ccc; }
.tabs { display: flex; height: 30px; padding-left: 2px; color: #888; flex: none; position: relative; z-index: 1; }
.tabs span { height: 29px; background: #d9d9d9; line-height: 30px; text-align: center; white-space: nowrap; }
.tabs .t1 { width: 102px; margin-right: 4px; letter-spacing: -.15px; }
.tabs .t2 { width: 68px; margin-right: 4px; letter-spacing: -.15px; }
.tabs .t3 { width: 96px; height: 31px; background: none; color: #0895d8; border-bottom: 3px solid #0895d8; }
.panel { flex: 1; border: 1px solid #848b96; display: flex; flex-direction: column; min-height: 0; }
h4 { margin: 0; font-weight: normal; font-size: 13px; line-height: 15px; height: 20px; padding-left: 1px; flex: none; letter-spacing: -.1px; }
h4.second { height: 25px; padding: 5px 0 0 0; }
.list { background: #fff; border: 1px solid #848b96; padding: 1px; flex: none; }
.types { height: 374px; }
.presets { height: 182px; margin-bottom: 5px; }
.layers { height: 545px; }
ul { margin: 0; padding: 0; list-style: none; background: #0895d8; color: #fff; }
li { height: 20px; display: flex; align-items: center; padding-left: 3px; white-space: pre; }
li svg { margin-right: 6px; }
.sw { width: 16px; height: 16px; margin-right: 6px; background: #7295b5; border: 1px solid #84a5c4; flex: none; }
.top { background: #732b48; border-color: #8e2744; }
.bottom { background: #0378b8; border-color: #0a86cc; }
.pads { background: #229f90; border-color: #33b295; }
.unrouted { background: #72935c; border-color: #8aa04c; }
.dim { background: #84906a; border-color: #9aa05c; }
.dots { background: radial-gradient(circle, var(--d) .5px, transparent .9px) 0 0 / 4px 4px, radial-gradient(circle, var(--d) .5px, transparent .9px) 2px 2px / 4px 4px, #06233f; border-color: var(--c); }
.dash { background: radial-gradient(circle, var(--d) .5px, transparent .9px) 1px 1px / 4px 5px, #06233f; border-color: var(--c); }
.red { --c: #7a2d4a; --d: #552844; }
.blue { --c: #0470b0; --d: #055a90; }
.green { --c: #229f80; --d: #147060; }
.one { word-spacing: 1.500px; }
.presets p { margin: 0; height: 16px; line-height: 17px; padding-left: 4px; letter-spacing: -.4px; }
.presets p:nth-child(even) { background: #f4f4f4; }
.panel footer { flex: 1; display: flex; justify-content: flex-end; padding-top: 2px; }
button { width: 49px; height: 26px; background: #fff; border: 1px solid #848484; border-radius: 4px; font: inherit; color: #333; padding: 0; letter-spacing: -.2px; }
.splitter { width: 4px; background: #d9d9d9; flex: none; }
.editor { flex: 1; display: flex; flex-direction: column; min-width: 0; }
.command { height: 34px; flex: none; display: flex; align-items: center; }
.command span { width: 139px; padding-left: 7px; flex: none; white-space: nowrap; }
.input { width: 1726px; height: 26px; background: #fff; border: 1px solid #0895d8; display: flex; align-items: center; justify-content: space-between; padding: 0 5px 0 6px; }
.input i { width: 1px; height: 14px; background: #000; }
.view { display: grid; grid-template: 1161px 16px / 1853px 16px; }
.board { font-family: 'Liberation Sans', Arial, sans-serif; }
.vscroll, .hscroll { background: conic-gradient(#fff 25%, #ececec 0 50%, #fff 0 75%, #ececec 0) 0 0 / 2px 2px; }
.vscroll { padding: 685px 5px 0; }
.vscroll i { display: block; height: 475px; background: #808080; border-radius: 2px; }
.hscroll { padding: 5px 0 0 330px; }
.hscroll i { display: block; width: 745px; height: 6px; background: #808080; border-radius: 2px; }
.status { height: 26px; flex: none; border-top: 1px solid #848484; border-bottom: 1px solid #24407a; display: flex; align-items: center; padding: 0 18px 0 6px; letter-spacing: -.22px; }
.status span { flex: 1; }
.status i { width: 1px; height: 21px; background: #ccc; }
</style>
